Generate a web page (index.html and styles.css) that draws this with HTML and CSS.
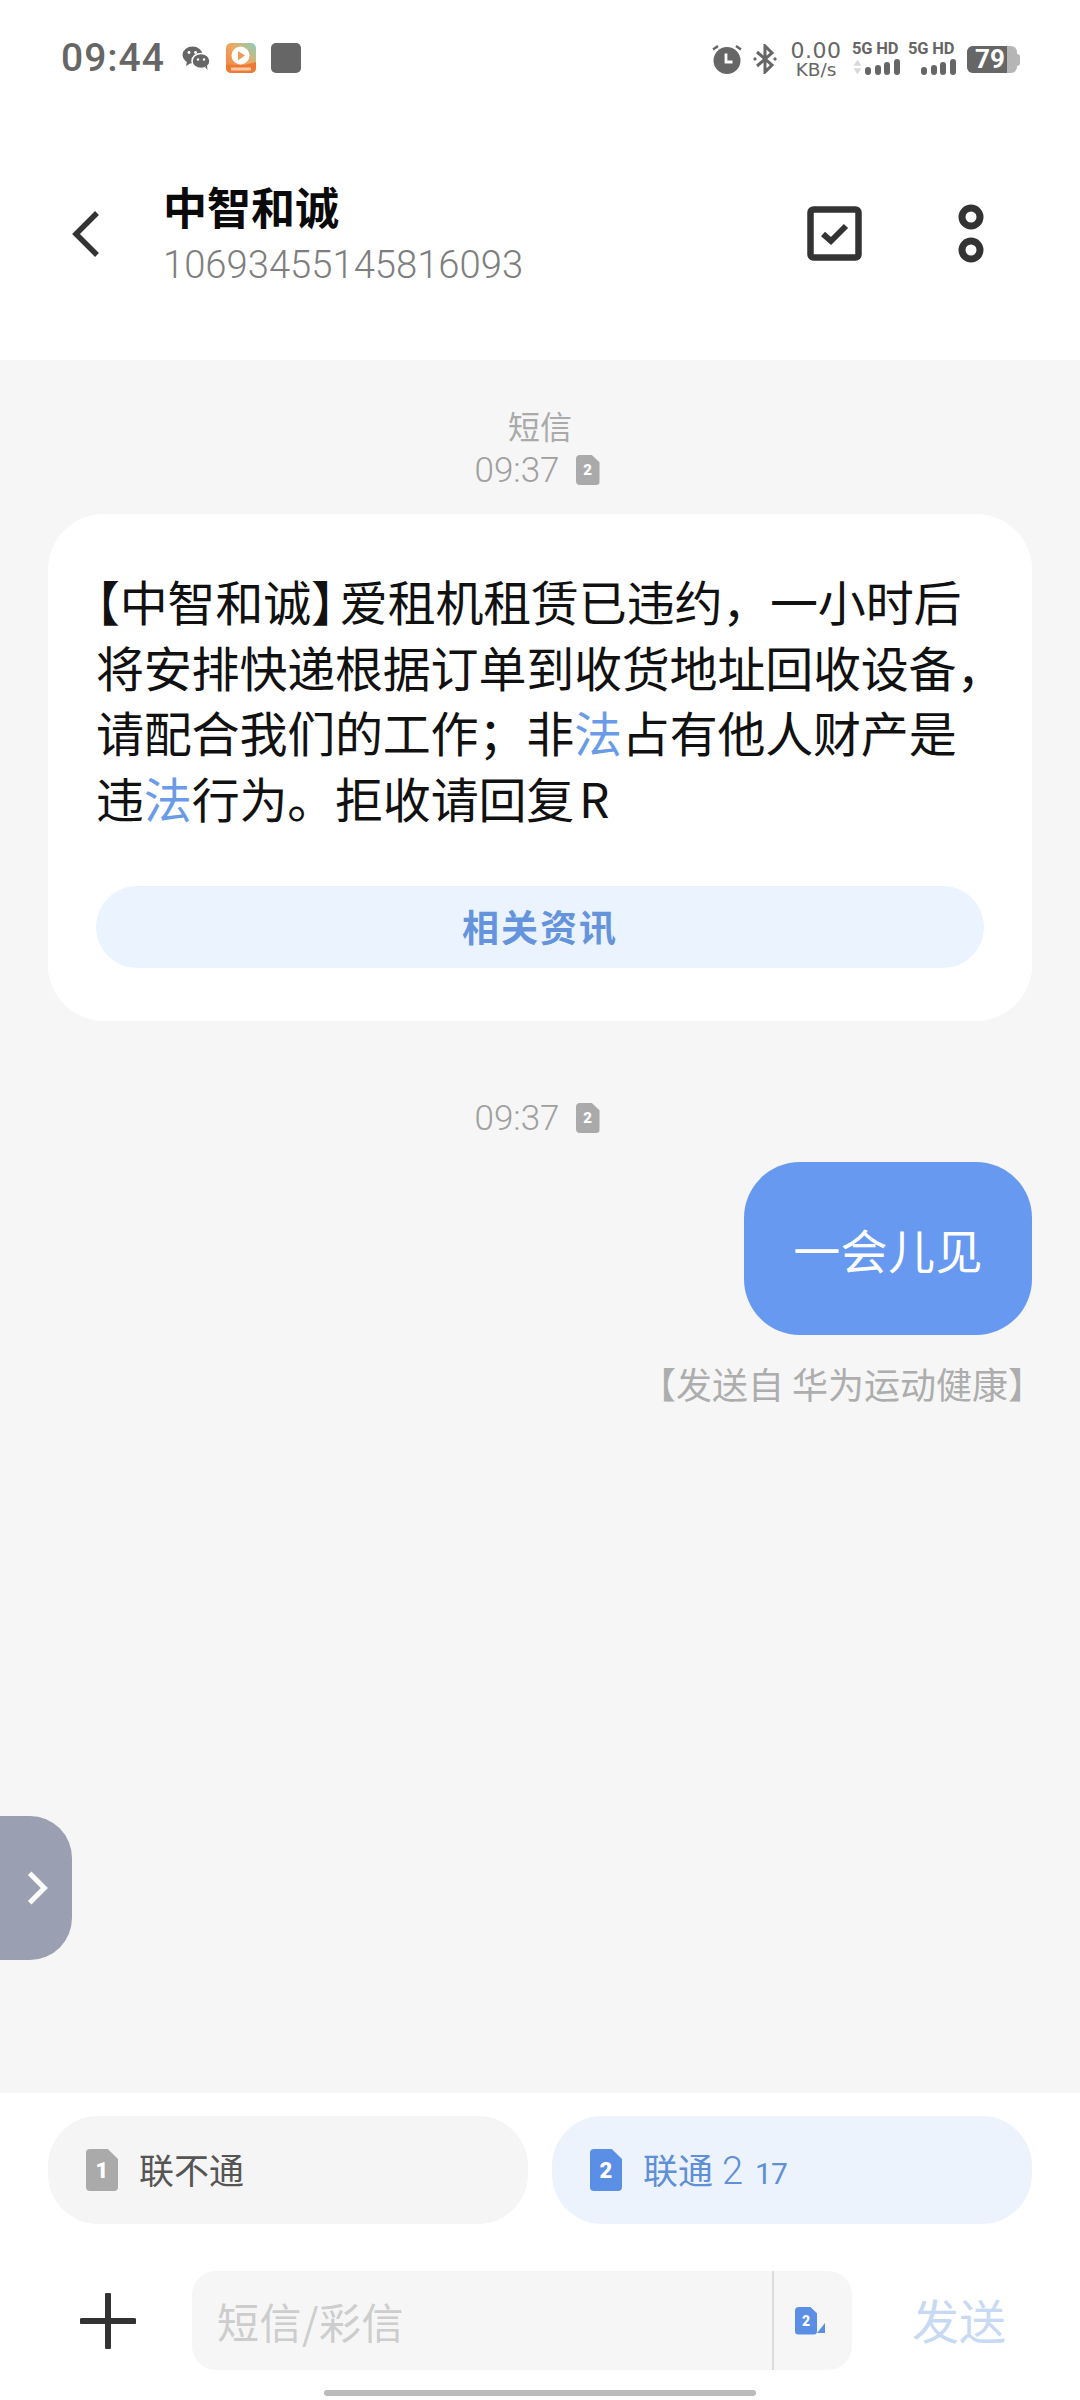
FILE: index.html
```html
<!DOCTYPE html>
<html>
<head>
    <title>短信</title>
    <link rel="stylesheet" href="styles.css">
</head>
<body>
    <div class="phone">
        <div class="status-bar">
            <div class="status-left">
                <span class="clock">09:44</span>
                <svg class="ico-wechat" viewBox="0 0 28 24">
                    <ellipse cx="10.500" cy="9" rx="10" ry="8.500" fill="#666"/>
                    <path d="M5 15l-1 5 5-3z" fill="#666"/>
                    <ellipse cx="19" cy="15" rx="9" ry="7.600" fill="#666" stroke="#fff" stroke-width="1.500"/>
                    <path d="M23 21l2.500 3-.5-5z" fill="#666"/>
                    <circle cx="7" cy="6.500" r="1.400" fill="#fff"/>
                    <circle cx="13.500" cy="6.500" r="1.400" fill="#fff"/>
                    <circle cx="16" cy="13.500" r="1.200" fill="#fff"/>
                    <circle cx="22" cy="13.500" r="1.200" fill="#fff"/>
                </svg>
                <svg class="ico-app" viewBox="0 0 30 30">
                    <defs>
                        <linearGradient id="appBg" x1="0" y1="1" x2="1" y2="0">
                            <stop offset="0" stop-color="#ee7f3c"/>
                            <stop offset="0.55" stop-color="#f0a863"/>
                            <stop offset="1" stop-color="#7fd3c0"/>
                        </linearGradient>
                    </defs>
                    <rect width="30" height="30" rx="5" fill="url(#appBg)"/>
                    <path d="M0 22c8-1 15 2 30-3v6a5 5 0 0 1-5 5H5a5 5 0 0 1-5-5z" fill="#ec7a35"/>
                    <circle cx="14.500" cy="12.500" r="9" fill="#fff"/>
                    <path d="M12 8l7 4.500-7 5z" fill="#ee9a5c"/>
                    <rect x="5" y="24.500" width="20" height="3" fill="#f7c9a2"/>
                </svg>
                <div class="ico-square"></div>
            </div>
            <div class="status-right">
                <svg class="ico-alarm" viewBox="0 0 30 30">
                    <circle cx="15" cy="16.500" r="13.500" fill="#666"/>
                    <path d="M14 9.500v8.500h6.500" fill="none" stroke="#fff" stroke-width="2.800"/>
                    <path d="M1 5.500l5-3.500M29 5.500l-5-3.500" stroke="#666" stroke-width="2.500" fill="none"/>
                </svg>
                <svg class="ico-bt" viewBox="0 0 26 30">
                    <path d="M5 8l15 13-7 7V2l7 7L5 22" fill="none" stroke="#666" stroke-width="3"/>
                    <path d="M1 15l2-2 2 2-2 2zM21 15l2-2 2 2-2 2z" fill="#666"/>
                </svg>
                <div class="net-speed">
                    <span class="speed-num">0.00</span>
                    <span class="speed-unit">KB/s</span>
                </div>
                <div class="sim-signal">
                    <span class="sig-label">5G HD</span>
                    <div class="sig-row">
                        <svg class="sig-arrows" viewBox="0 0 10 16">
                            <path d="M5 0l4.500 6.500h-9zM5 16l4.500-6.500h-9z" fill="#d9d9d9"/>
                        </svg>
                        <i class="bar b1"></i><i class="bar b2"></i><i class="bar b3"></i><i class="bar b4"></i>
                    </div>
                </div>
                <div class="sim-signal">
                    <span class="sig-label">5G HD</span>
                    <div class="sig-row">
                        <i class="bar b1"></i><i class="bar b2"></i><i class="bar b3"></i><i class="bar b4"></i>
                    </div>
                </div>
                <div class="battery">
                    <div class="battery-body"><div class="battery-fill"></div><span class="battery-num">79</span></div>
                    <div class="battery-cap"></div>
                </div>
            </div>
        </div>

        <div class="header">
            <svg class="back" viewBox="0 0 28 48">
                <path d="M25 3L4 24l21 21" fill="none" stroke="#333" stroke-width="5.500"/>
            </svg>
            <div class="contact">
                <div class="contact-name">中智和诚</div>
                <div class="contact-number">10693455145816093</div>
            </div>
            <svg class="ico-select" viewBox="0 0 55 55">
                <rect x="3.500" y="3.500" width="48" height="48" rx="3" fill="none" stroke="#333" stroke-width="6.500"/>
                <path d="M16 28l8 7 15-15" fill="none" stroke="#333" stroke-width="6"/>
            </svg>
            <svg class="ico-more" viewBox="0 0 26 60">
                <circle cx="13" cy="13" r="9" fill="none" stroke="#333" stroke-width="7"/>
                <circle cx="13" cy="46" r="9" fill="none" stroke="#333" stroke-width="7"/>
            </svg>
        </div>

        <div class="chat">
            <div class="chat-type">短信</div>
            <div class="chat-time first">
                <span>09:37</span>
                <div class="sim-icon sim-gray small">2</div>
            </div>
            <div class="bubble-in">
                <div class="bubble-text"><span class="half">【</span>中智和诚<span class="half close">】</span>爱租机租赁已违约，一小时后<br>将安排快递根据订单到收货地址回收设备，<br>请配合我们的工作；非<span class="link">法</span>占有他人财产是<br>违<span class="link">法</span>行为。拒收请回复<span class="latin">R</span></div>
                <div class="bubble-btn">相关资讯</div>
            </div>
            <div class="chat-time second">
                <span>09:37</span>
                <div class="sim-icon sim-gray small">2</div>
            </div>
            <div class="bubble-out">一会儿见</div>
            <div class="sent-from">【发送自 华为运动健康】</div>
            <div class="side-tab">
                <svg viewBox="0 0 24 38">
                    <path d="M4 3l16 16L4 35" fill="none" stroke="#fff" stroke-width="5.500"/>
                </svg>
            </div>
        </div>

        <div class="bottom">
            <div class="sim-pills">
                <div class="pill">
                    <div class="sim-icon sim-gray">1</div>
                    <span>联不通</span>
                </div>
                <div class="pill pill-active">
                    <div class="sim-icon sim-blue">2</div>
                    <span>联通<span class="sim-no">2</span><span class="sim-sub">17</span></span>
                </div>
            </div>
            <div class="composer">
                <svg class="plus" viewBox="0 0 56 56">
                    <path d="M28 2v52M2 28h52" stroke="#333" stroke-width="6" stroke-linecap="round"/>
                </svg>
                <div class="input-box">
                    <div class="placeholder">短信/彩信</div>
                    <div class="input-sim">
                        <div class="sim-icon sim-blue tiny">2</div>
                        <svg class="sim-tri" viewBox="0 0 8 10"><path d="M8 0v10H0z" fill="#5b8fe6"/></svg>
                    </div>
                </div>
                <div class="send">发送</div>
            </div>
            <div class="home-bar"></div>
        </div>
    </div>
</body>
</html>
```
FILE: styles.css
```css
* {
    box-sizing: border-box;
}

body {
    margin: 0;
    background-color: white;
    font-family: "Noto Sans CJK SC", Roboto, sans-serif;
}

.phone {
    width: 1080px;
    height: 2400px;
    display: flex;
    flex-direction: column;
    overflow: hidden;
}

/* status bar */
.status-bar {
    height: 120px;
    padding: 41px 60px 0 61px;
    display: flex;
    justify-content: space-between;
    align-items: flex-start;
    color: #666;
}

.status-left {
    display: flex;
    align-items: center;
    height: 34px;
}

.clock {
    font-family: Roboto, sans-serif;
    font-size: 39px;
    font-weight: 500;
    letter-spacing: 1px;
    width: 121px;
}

.ico-wechat {
    width: 28px;
    height: 24px;
    margin-right: 16px;
}

.ico-app {
    width: 30px;
    height: 30px;
    margin-right: 15px;
}

.ico-square {
    width: 30px;
    height: 30px;
    border-radius: 5px;
    background-color: #666;
}

.status-right {
    display: flex;
    align-items: flex-start;
}

.ico-alarm {
    width: 30px;
    height: 30px;
    margin: 3px 10px 0 0;
}

.ico-bt {
    width: 26px;
    height: 30px;
    margin: 3px 13px 0 0;
}

.net-speed {
    width: 50px;
    margin-right: 11px;
    display: flex;
    flex-direction: column;
    align-items: center;
    font-family: "DejaVu Sans", sans-serif;
}

.speed-num {
    font-size: 22px;
    line-height: 20px;
    letter-spacing: 0.5px;
}

.speed-unit {
    font-size: 18.500px;
    line-height: 17px;
}

.sim-signal {
    width: 48px;
    margin-right: 8px;
    display: flex;
    flex-direction: column;
}

.sim-signal + .sim-signal {
    margin-right: 11px;
}

.sig-label {
    font-family: Roboto, sans-serif;
    font-size: 16.500px;
    font-weight: 700;
    letter-spacing: -0.2px;
    line-height: 15px;
    white-space: nowrap;
}

.sig-row {
    margin-top: 3px;
    height: 16px;
    display: flex;
    justify-content: flex-end;
    align-items: flex-end;
    gap: 3.600px;
}

.sig-arrows {
    width: 9px;
    height: 16px;
    flex-shrink: 0;
}

.bar {
    display: block;
    width: 6px;
    flex-shrink: 0;
    background-color: #666;
    border-radius: 3px;
}

.b1 { height: 8px; }
.b2 { height: 10px; }
.b3 { height: 13px; }
.b4 { height: 16px; }

.battery {
    margin-top: 5px;
    display: flex;
    align-items: center;
}

.battery-body {
    position: relative;
    width: 50px;
    height: 27px;
    border-radius: 6px;
    background-color: #b5b5b5;
}

.battery-fill {
    width: 40px;
    height: 27px;
    border-radius: 6px 0 0 6px;
    background-color: #666;
}

.battery-num {
    position: absolute;
    left: 6px;
    top: 0;
    width: 34px;
    text-align: center;
    font-family: Roboto, sans-serif;
    font-size: 26px;
    font-weight: 700;
    line-height: 27px;
    color: white;
}

.battery-cap {
    width: 3px;
    height: 12px;
    background-color: #b5b5b5;
    border-radius: 0 3px 3px 0;
}

/* header */
.header {
    height: 240px;
    display: flex;
    align-items: flex-start;
}

.back {
    width: 28px;
    height: 48px;
    margin: 90px 0 0 72px;
}

.contact {
    width: 626px;
    margin: 56px 0 0 63px;
}

.contact-name {
    font-size: 44px;
    font-weight: 700;
    line-height: 60px;
    color: #0a0a0a;
}

.contact-number {
    font-family: Roboto, sans-serif;
    font-size: 38.200px;
    font-weight: 300;
    line-height: 48px;
    margin-top: 5px;
    color: #7e7e7e;
}

.ico-select {
    width: 55px;
    height: 55px;
    margin: 86px 0 0 18px;
}

.ico-more {
    width: 26px;
    height: 60px;
    margin: 84px 0 0 96px;
}

/* chat */
.chat {
    position: relative;
    flex: 1;
    background-color: #f6f6f6;
    padding: 44px 48px 0 48px;
    display: flex;
    flex-direction: column;
    color: #aaa;
}

.chat-type {
    text-align: center;
    font-size: 32px;
    line-height: 42px;
}

.chat-time {
    display: flex;
    justify-content: center;
    align-items: center;
    gap: 16px;
    height: 42px;
    padding-right: 6px;
    font-family: Roboto, sans-serif;
    font-size: 35px;
    font-weight: 300;
    color: #a0a0a0;
}

.chat-time.first {
    margin-top: 3px;
}

.chat-time.second {
    margin-top: 76px;
}

.sim-icon {
    width: 32px;
    height: 42px;
    border-radius: 4px;
    clip-path: polygon(0 0, 68% 0, 100% 24%, 100% 100%, 0 100%);
    display: flex;
    align-items: center;
    justify-content: center;
    font-family: Roboto, sans-serif;
    font-size: 22px;
    font-weight: 900;
    color: white;
}

.sim-icon.small {
    width: 24px;
    height: 30px;
    font-size: 15px;
}

.sim-icon.tiny {
    width: 22px;
    height: 28px;
    font-size: 14px;
}

.sim-gray {
    background-color: #aaa;
}

.sim-blue {
    background-color: #5b8fe6;
}

.bubble-in {
    margin-top: 23px;
    height: 507px;
    background-color: white;
    border-radius: 56px;
    padding: 54px 48px 0 48px;
}

.bubble-text {
    font-size: 48px;
    letter-spacing: -0.2px;
    line-height: 65.500px;
    color: #111;
    white-space: nowrap;
    height: 318px;
}

.half {
    font-feature-settings: "halt";
}

.half.close {
    margin-right: 5px;
}

.latin {
    margin-left: 5px;
}

.link {
    color: #6a9be6;
}

.bubble-btn {
    height: 82px;
    border-radius: 41px;
    background-color: #ebf3fe;
    text-align: center;
    font-size: 37px;
    font-weight: 700;
    letter-spacing: 2px;
    line-height: 80px;
    color: #6594dc;
}

.bubble-out {
    align-self: flex-end;
    margin-top: 23px;
    width: 288px;
    height: 173px;
    border-radius: 56px;
    background-color: #6699ef;
    text-align: center;
    font-size: 47px;
    letter-spacing: 0.4px;
    line-height: 173px;
    color: white;
}

.sent-from {
    align-self: flex-end;
    margin-top: 23px;
    margin-right: -12px;
    font-size: 36px;
    line-height: 50px;
    color: #adadad;
    white-space: nowrap;
}

.side-tab {
    position: absolute;
    left: 0;
    top: 1456px;
    width: 72px;
    height: 144px;
    border-radius: 0 42px 42px 0;
    background-color: #9a9fb2;
    display: flex;
    align-items: center;
    padding-left: 26px;
}

.side-tab svg {
    width: 22px;
    height: 36px;
}

/* bottom */
.bottom {
    height: 307px;
    flex-shrink: 0;
    background-color: white;
    padding-top: 23px;
    display: flex;
    flex-direction: column;
}

.sim-pills {
    display: flex;
    gap: 24px;
    padding: 0 48px;
}

.pill {
    flex: 1;
    height: 108px;
    border-radius: 50px;
    background-color: #f5f5f5;
    padding-left: 38px;
    display: flex;
    align-items: center;
    gap: 21px;
    font-size: 35px;
    color: #555;
}

.pill > span {
    margin-top: -4px;
}

.pill-active {
    background-color: #edf3fd;
    color: #5f8fd6;
}

.sim-no {
    margin-left: 9px;
    font-family: Roboto, sans-serif;
    font-size: 38px;
    font-weight: 300;
}

.sim-sub {
    margin-left: 12px;
    font-family: Roboto, sans-serif;
    font-size: 30px;
    letter-spacing: -1px;
}

.composer {
    margin-top: 47px;
    height: 99px;
    display: flex;
    align-items: center;
}

.plus {
    width: 56px;
    height: 56px;
    margin-left: 80px;
}

.input-box {
    width: 660px;
    height: 99px;
    margin-left: 56px;
    border-radius: 24px;
    background-color: #f6f6f6;
    display: flex;
}

.placeholder {
    width: 582px;
    padding-left: 25px;
    font-size: 42px;
    letter-spacing: 0.5px;
    line-height: 99px;
    color: #cdcdcd;
    border-right: 2px solid #dcdcdc;
}

.input-sim {
    position: relative;
    flex: 1;
    display: flex;
    align-items: center;
    padding: 0 0 0 21px;
}

.sim-tri {
    position: absolute;
    left: 43px;
    top: 52px;
    width: 8px;
    height: 10px;
}

.send {
    margin: -5px 0 0 60px;
    font-size: 47px;
    color: #c8daf3;
}

.home-bar {
    align-self: center;
    margin-top: 20px;
    width: 432px;
    height: 6px;
    border-radius: 3px;
    background-color: #bbb;
}
```
